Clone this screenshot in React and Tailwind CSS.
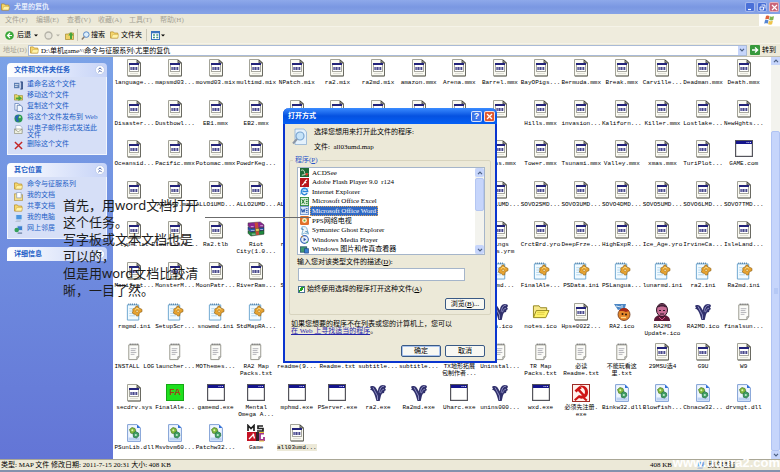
import React from "react";

function DocIcon() {
  return (
    <svg viewBox="0 0 16 18" className="h-[18px] w-4" aria-hidden="true">
      <path d="M1.500 .5H11L14.500 4v13h-13z" fill="#fafaf2" stroke="#a3a398" />
      <path d="M14.500 4.500v12.500H2" fill="none" stroke="#6a6a62" />
      <path d="M11 1v3h3.500z" fill="#b8b8b0" stroke="#33332f" strokeWidth=".8" />
      <rect x="3.500" y="4.500" width="9" height="8" fill="#fff" stroke="#a8a8a0" />
      <rect x="3" y="4" width="10" height="2" fill="#23237a" />
      <rect x="4.500" y="8" width="7" height="3" fill="#8f8fba" />
      <path d="M5 8v3M7.500 8v3M10.500 8v3" stroke="#3f3f86" strokeWidth=".9" />
      <path d="M4 14.500h8" stroke="#deded6" />
    </svg>
  );
}

function IniIcon() {
  return (
    <svg viewBox="0 0 18 19" className="h-[18px] w-[18px]" aria-hidden="true">
      <path d="M2 2h12v16H2z" fill="#f1faff" stroke="#6aa5cf" />
      <path d="M3 1.200h10" stroke="#4f7fa8" strokeDasharray="1 1" strokeWidth="1.600" />
      <path d="M4 6h4M4 8.500h4M4 11h5M4 13.500h6" stroke="#a9d1ea" strokeWidth=".9" />
      <path d="M11 3.500l2-.5.8 2.200 1.600.6 2 1v2.400l-2.200.7-1 1.600-.2 2-2.200.3-1.200-1.800-1.600-.2-1.800-1.300.8-2-.4-1.700 1.600-1.400 1.200.2z" fill="#e9a431" stroke="#8c5f17" strokeWidth=".7" />
      <path d="M10 7l2-1.500 2.500 1" stroke="#ffe08a" fill="none" />
      <circle cx="12.300" cy="8.800" r="1.200" fill="#fff0bd" stroke="#a87722" strokeWidth=".6" />
    </svg>
  );
}

function TxtIcon() {
  return (
    <svg viewBox="0 0 14 19" className="h-[18px] w-[14px]" aria-hidden="true">
      <path d="M1.500 2h10.500v12.500L10 17.500H1.500z" fill="#fbfbf8" stroke="#96968c" />
      <path d="M2.500 1.300h9" stroke="#666" strokeDasharray="1 1" strokeWidth="1.600" />
      <path d="M3.500 6h6M3.500 8h5M3.500 10h6M3.500 12h4" stroke="#a9a9b0" strokeWidth=".9" />
      <path d="M12 14.500H10v3" fill="#d9d9d0" stroke="#777" strokeWidth=".7" />
    </svg>
  );
}

function WinIcon() {
  return (
    <svg viewBox="0 0 18 17" className="h-[17px] w-[18px]" aria-hidden="true">
      <rect x=".6" y=".6" width="16.800" height="15.800" fill="#fff" stroke="#55555c" strokeWidth="1.200" />
      <rect x="1" y="1" width="16" height="3" fill="#14148c" />
      <path d="M11.500 2.500h1M13.300 2.500h1M15 2.500h1" stroke="#cfd0ee" strokeWidth="1.200" />
    </svg>
  );
}

function DllIcon() {
  return (
    <svg viewBox="0 0 14 18" className="h-[18px] w-[14px]" aria-hidden="true">
      <path d="M.6 .6h9.400L13.400 4v13.400H.6z" fill="#eef5ff" stroke="#7f9fd6" />
      <path d="M10 .6V4h3.400z" fill="#2f6fd8" />
      <path d="M1.500 15h11" stroke="#bcd2f2" strokeWidth="3" />
      <path d="M2.500 5.500l2.500-2 3 1 .8 2.500-2 2.500-3-.3z" fill="#7fba3c" stroke="#4a7a26" strokeWidth=".7" />
      <path d="M6 9.500l2.500-2 3 1.500.3 3-2.300 2-3-.8z" fill="#3f9f63" stroke="#256b43" strokeWidth=".7" />
      <circle cx="5.300" cy="6.300" r="1" fill="#e4f3b5" />
      <circle cx="8.800" cy="11" r="1.100" fill="#c4e8cd" />
    </svg>
  );
}

function YuriIcon() {
  return (
    <svg viewBox="0 0 18 18" className="h-[18px] w-[18px]" aria-hidden="true">
      <path d="M1 3c1-1.500 4-1.500 5.500.5L9 7.500C9 4 10.500 1 14 1c1.800 0 3 .8 3 2l-1 1.500 1 1.500-1.500 1-.5 2-2 .5-1 2-1.300 5.500H7.500L6 12C5 9 3.500 6 1 5.500l1-1z" fill="#30306c" />
      <path d="M4 3.500L8.500 12v4M15 2.200c-3 0-4.200 3-4.800 6.500M15 5.200c-2 .3-3 1.800-3.500 4" stroke="#9494c8" fill="none" strokeWidth=".9" />
    </svg>
  );
}

function FolderArt() {
  return (
    <svg viewBox="0 0 20 18" className="h-[17px] w-5" aria-hidden="true">
      <path d="M2 15V3h6l1.500 2H16v3" fill="#f7e88a" stroke="#92851e" />
      <path d="M2 15.500L5 8h13.500L15 15.500z" fill="#fff36a" stroke="#92851e" />
      <path d="M6 10h8M5.500 12h8" stroke="#d9c43d" strokeWidth=".8" />
    </svg>
  );
}

function FaIcon() {
  return (
    <span className="flex h-[17px] w-[18px] items-center justify-center border border-[#14a814] bg-[#1ee01e] font-['Liberation_Sans',sans-serif] text-[9px] leading-none font-bold text-[#a0401c]">
      FA
    </span>
  );
}

function RedIcon() {
  return (
    <svg viewBox="0 0 18 18" className="h-[18px] w-[18px]" aria-hidden="true">
      <rect x=".5" y=".5" width="17" height="17" fill="#fff1ec" stroke="#9c2a24" />
      <path d="M8 1.500c5.500-.5 8.500 3 8 7.500-.3 2.500-1.500 4-3 4.800l2.500 2-1.500 1.400-3-2.600c-1.500.2-2.800 0-4-.5L3.500 17 2 15.500 7 11c3 1.500 6 0 6-3 0-2.700-2-4.800-5-5.500z" fill="#cf1515" />
      <path d="M2.500 6.500l5-4.500 2.500 2-2 1.500 4.500 5-1.800 1.600-4.700-5.200-1.500 1.600z" fill="#cf1515" />
    </svg>
  );
}

function RarIcon() {
  return (
    <svg viewBox="0 0 19 17" className="h-4 w-[18px]" aria-hidden="true">
      <path d="M1 2l13-1 4 3v3L4 8 1 5z" fill="#8a2590" stroke="#333" strokeWidth=".5" />
      <path d="M1 6l3 2 14-1v3L4 12 1 9z" fill="#2350b0" stroke="#222" strokeWidth=".5" />
      <path d="M1 10l3 2 14-2v4L4 16l-3-3z" fill="#1f8a3d" stroke="#222" strokeWidth=".5" />
      <path d="M8 1.500h3.500l1.500 13-3.500.5z" fill="#c74938" />
      <path d="M9 8h4v3H9z" fill="#ecc95a" stroke="#5e421a" strokeWidth=".5" />
      <path d="M4 6h3M14 5h3M4 10h4M14 9h3M5 14h4" stroke="#f0eef5" strokeWidth=".7" />
    </svg>
  );
}

function MsgIcon() {
  return (
    <svg viewBox="0 0 18 18" className="h-[18px] w-[18px]" aria-hidden="true">
      <path d="M1 7V1.500l3 3 3-3V7M16 2h-5v2.500h5V7h-6" fill="none" stroke="#222" strokeWidth="1.700" />
      <rect x="0" y="8" width="9" height="9" fill="#c51224" />
      <path d="M2 15l5-5M6 9.500l1.500 5" stroke="#fff" strokeWidth="1.300" />
      <rect x="9" y="8" width="3" height="9" fill="#33212a" />
      <path d="M17 9.500h-4v6.500h4v-3" fill="none" stroke="#a2348e" strokeWidth="1.800" />
      <path d="M12 8.500h5M12 17h5" stroke="#e8c431" strokeWidth="1" />
    </svg>
  );
}

function Ra2Icon() {
  return (
    <svg viewBox="0 0 18 18" className="h-[18px] w-[18px]" aria-hidden="true">
      <path d="M1 1h12l-1 4-7 2z" fill="#4b86c4" />
      <path d="M3 3l5 1M9 2v4" stroke="#dceaf7" />
      <circle cx="11" cy="11.500" r="6" fill="#e4872a" stroke="#693014" strokeWidth=".8" />
      <path d="M6 8c2-4 8-4 10 0l-3 1-3-1z" fill="#a52a18" />
      <circle cx="9.500" cy="11" r="1" fill="#31190e" />
      <circle cx="13" cy="11.500" r="1" fill="#31190e" />
      <path d="M8 14.500h5" stroke="#fbd88b" strokeWidth="1.300" />
    </svg>
  );
}

function UpdateIcon() {
  return (
    <svg viewBox="0 0 18 18" className="h-[18px] w-[18px]" aria-hidden="true">
      <path d="M1 18c0-5 4-6 8-6s8 1 8 6z" fill="#5c1836" />
      <ellipse cx="9" cy="7" rx="5.500" ry="6.500" fill="#c76d95" stroke="#2c1524" />
      <path d="M4 5c1-5 9-5 10 0-3-2-7-2-10 0z" fill="#432239" />
      <path d="M6 7.500h2M10 7.500h2M7 11h4" stroke="#2c1524" strokeWidth="1.100" />
      <path d="M6 14l3 3 3-3" stroke="#d65484" fill="none" />
    </svg>
  );
}

const ICONS = {
  doc: DocIcon,
  ini: IniIcon,
  txt: TxtIcon,
  win: WinIcon,
  dll: DllIcon,
  yuri: YuriIcon,
  folder: FolderArt,
  fa: FaIcon,
  red: RedIcon,
  rar: RarIcon,
  msg: MsgIcon,
  ra2: Ra2Icon,
  update: UpdateIcon,
};

const d = (...names) => names.map((n) => ["doc", n]);

const FILES = [
  ...d("language...", "mapsmd03...", "movmd03.mix", "multimd.mix", "NPatch.mix", "ra2.mix", "ra2md.mix", "amazon.mmx", "Arena.mmx", "Barrel.mmx", "BayOPigs...", "Bermuda.mmx", "Break.mmx", "Carville...", "Deadman.mmx", "Death.mmx"),
  ...d("Disaster...", "Dustbowl...", "EB1.mmx", "EB2.mmx", "", "", "", "", "", "", "Hills.mmx", "invasion...", "Kaliforn...", "Killer.mmx", "Lostlake...", "NewHghts..."),
  ...d("Oceansid...", "Pacific.mmx", "Potomac.mmx", "PowdrKeg...", "", "", "", "", "", "Texas.mmx", "Tower.mmx", "Tsunami.mmx", "Valley.mmx", "xmas.mmx", "TuriPlot..."),
  ["win", "GAME.com"],
  ...d("", "ALLMAP.map", "ALLO1UMD...", "ALLO2UMD...", "ALLO3UMD...", "", "", "", "", "SOVO1UMD...", "SOVO2SMD...", "SOVO3UMD...", "SOVO4DMD...", "SOVO5UMD...", "SOVO6LMD...", "SOVO7TMD..."),
  ...d("type.lst", "Blowfish.t...", "Ra2.tlb"),
  ["rar", "Riot\nCity(1.0..."],
  ...d("readme...", "", "", "", "", "Kings\nWars.yrm", "CrctBrd.yro", "DeepFrze...", "HighExpR...", "Ice_Age.yro", "IrvineCa...", "IsleLand..."),
  ...d("Manifest...", "MonsterM...", "MoonPatr...", "RiverRam...", "Sedona...", "", "", "", ""),
  ["ini", "artmd..."],
  ["ini", "FinalAle..."],
  ["ini", "PSData.ini"],
  ["ini", "PSLangua..."],
  ["ini", "lunarmd.ini"],
  ["ini", "ra2.ini"],
  ["ini", "Ra2md.ini"],
  ["ini", "rmgmd.ini"],
  ["ini", "SetupScr..."],
  ["ini", "snowmd.ini"],
  ["ini", "StdMapRA..."],
  ["ini", "Sun.ini"],
  ["ini", ""],
  ["ini", ""],
  ["ini", ""],
  ["ini", ""],
  ["yuri", "mna.ico"],
  ["folder", "notes.ico"],
  ["doc", "Hpse0022..."],
  ["ra2", "RA2.ico"],
  ["update", "RA2MD\nUpdate.ico"],
  ["yuri", "RA2MD.ico"],
  ["txt", "finalsun..."],
  ["txt", "INSTALL LOG"],
  ["txt", "launcher..."],
  ["txt", "MOThemes..."],
  ["txt", "RA2 Map\nPacks.txt"],
  ["txt", "readme(9..."],
  ["txt", "Readme.txt"],
  ["txt", "subtitle..."],
  ["txt", "subtitle..."],
  ["txt", "TX地形拓展\n包制作者..."],
  ["txt", "Uninstal..."],
  ["txt", "TR Map\nPacks.txt"],
  ["txt", "必读\nReadme.txt"],
  ["txt", "不能玩看这\n里.txt"],
  ["doc", "29MSU选4"],
  ["doc", "G9U"],
  ["doc", "W9"],
  ["doc", "secdrv.sys"],
  ["fa", "FinalAle..."],
  ["win", "gamemd.exe"],
  ["win", "Mental\nOmega A..."],
  ["win", "mphmd.exe"],
  ["win", "PServer.exe"],
  ["yuri", "ra2.exe"],
  ["yuri", "Ra2md.exe"],
  ["win", "Uharc.exe"],
  ["yuri", "unins000..."],
  ["win", "wxd.exe"],
  ["red", "必须先注册.\nexe"],
  ["dll", "Binkw32.dll"],
  ["dll", "Blowfish..."],
  ["dll", "Cbnacw32..."],
  ["dll", "drvmgt.dll"],
  ["dll", "PSunLib.dll"],
  ["dll", "Msvbvm60..."],
  ["dll", "Patchw32..."],
  ["msg", "Game"],
  ["doc", "all03umd...", true],
];

function FileItem({ kind, name, selected }) {
  const Icon = ICONS[kind];
  return (
    <li className="flex min-w-0 flex-col items-center gap-[2px]">
      <span className="flex h-[18px] items-start">
        <Icon />
      </span>
      <span className={selected ? "bg-[#ece9d8] whitespace-pre" : "text-center whitespace-pre"}>{name}</span>
    </li>
  );
}

function SmallFolder() {
  return (
    <svg viewBox="0 0 10 9" className="h-2 w-[9px] shrink-0" aria-hidden="true">
      <path d="M.5 8V1h3.200l1 1.300h4V8z" fill="#f6d66b" stroke="#b68d28" strokeWidth=".8" />
      <path d="M1.500 7.800L3 4h6.500L8.500 7.800z" fill="#fff3ab" stroke="#c79f3a" strokeWidth=".5" />
    </svg>
  );
}

function TaskGlyph({ kind }) {
  return (
    <svg viewBox="0 0 10 10" className="h-[9px] w-[9px] shrink-0" aria-hidden="true">
      {kind === "rename" && (
        <>
          <rect x="0" y="2" width="6" height="6" fill="#5c7eb2" />
          <path d="M1 4h4M1 6h3" stroke="#fff" strokeWidth=".8" />
          <path d="M7 1h2.500v8H7M8.200 1v8" stroke="#2c4a82" fill="none" />
        </>
      )}
      {kind === "move" && (
        <>
          <path d="M.5 9V3h3l1 1h5v5z" fill="#e6d76a" stroke="#97862b" strokeWidth=".7" />
          <path d="M2 6h3V4l4 3-4 3V8H2z" fill="#4aa53a" />
        </>
      )}
      {kind === "copy" && (
        <>
          <path d="M1 .5h4L7 3v5H1z" fill="#fff" stroke="#5377b4" strokeWidth=".8" />
          <path d="M3.500 2.500h4L9.300 4.500v5H3.500z" fill="#f5faff" stroke="#3d629f" strokeWidth=".8" />
        </>
      )}
      {kind === "web" && (
        <>
          <circle cx="5" cy="5" r="4.500" fill="#2a9a50" />
          <path d="M1 3c2-2 3-2 5-2L4 5l2 3-3 1z" fill="#2c62b8" />
          <circle cx="6.500" cy="3.500" r="1.200" fill="#b5e3a9" />
        </>
      )}
      {kind === "mail" && (
        <>
          <path d="M2 .5h5L9 3v5H2z" fill="#fff" stroke="#8ea3bf" strokeWidth=".7" />
          <path d="M.5 4.500h8.500v5H.5zl4.200 3 4.300-3" fill="#eef0e2" stroke="#8a8a70" strokeWidth=".7" />
        </>
      )}
      {kind === "delete" && <path d="M1 1l8 8M9 1L1 9" stroke="#c32424" strokeWidth="1.600" />}
      {kind === "docs" && (
        <>
          <path d="M.5 2h4l1 1h4v6.500h-9z" fill="#f4dc85" stroke="#a98a35" strokeWidth=".7" />
          <path d="M3 .5h5v6H3z" fill="#fff" stroke="#7c94b8" strokeWidth=".7" />
        </>
      )}
      {kind === "pc" && (
        <>
          <rect x="2" y=".5" width="7" height="6" fill="#4a94e0" stroke="#d9e6f5" />
          <path d="M1 9h6l1-2H3z" fill="#b9c5d9" />
        </>
      )}
      {kind === "net" && (
        <>
          <rect x="3.500" y="1" width="6" height="5" fill="#3c7fd0" stroke="#d3e1f2" strokeWidth=".8" />
          <circle cx="3" cy="5.500" r="2.500" fill="#35a05a" />
          <path d="M4 9h5" stroke="#62789c" strokeWidth="1.300" />
        </>
      )}
    </svg>
  );
}

function Chevron({ flip }) {
  return (
    <svg viewBox="0 0 10 10" className="h-[10px] w-[10px]" aria-hidden="true">
      <circle cx="5" cy="5" r="4.500" fill="#fff" stroke="#b3c3e6" strokeWidth=".7" />
      <path d={flip ? "M3.300 2.800L5 4.500l1.700-1.700M3.300 5.500L5 7.200l1.700-1.700" : "M3.300 4.500L5 2.800l1.700 1.700M3.300 7.200L5 5.500l1.700 1.700"} fill="none" stroke="#2b4a9c" strokeWidth=".9" />
    </svg>
  );
}

function Panel({ title, items, flip }) {
  return (
    <section>
      <h2 className="flex h-[14px] items-center justify-between rounded-t-sm bg-linear-to-r from-white to-[#c6d3f7] pr-[2px] pl-[7px] font-bold text-[#215dc6]">
        {title}
        <button type="button" aria-label={title}>
          <Chevron flip={flip} />
        </button>
      </h2>
      {items && (
        <ul className="flex flex-col gap-[2px] border border-t-0 border-white/70 bg-[#d6dff7] pt-1 pb-1 pl-[6px] text-[#215dc6]">
          {items.map(([kind, label]) => (
            <li key={label}>
              <a href="#" className="flex items-start gap-[4px] leading-[7px] whitespace-pre">
                {kind === "folder" ? (
                  <span className="flex h-[9px] items-center"><SmallFolder /></span>
                ) : (
                  <TaskGlyph kind={kind} />
                )}
                {label}
              </a>
            </li>
          ))}
        </ul>
      )}
    </section>
  );
}

const TASKS = [
  ["rename", "重命名这个文件"],
  ["move", "移动这个文件"],
  ["copy", "复制这个文件"],
  ["web", "将这个文件发布到 Web"],
  ["mail", "以电子邮件形式发送此\n文件"],
  ["delete", "删除这个文件"],
];

const PLACES = [
  ["folder", "命令与征服系列"],
  ["docs", "我的文档"],
  ["folder", "共享文档"],
  ["pc", "我的电脑"],
  ["net", "网上邻居"],
];

const PROGRAMS = [
  ["acd", "ACDSee"],
  ["flash", "Adobe Flash Player 9.0  r124"],
  ["ie", "Internet Explorer"],
  ["excel", "Microsoft Office Excel"],
  ["word", "Microsoft Office Word"],
  ["pps", "PPS网络电视"],
  ["ghost", "Symantec Ghost Explorer"],
  ["wmp", "Windows Media Player"],
  ["pic", "Windows 图片和传真查看器"],
];

function ProgramIcon({ kind }) {
  return (
    <svg viewBox="0 0 10 10" className="h-[9px] w-[9px] shrink-0" aria-hidden="true">
      {kind === "acd" && (
        <>
          <rect width="10" height="10" fill="#1e6a35" />
          <path d="M1 3c2-2 4 0 4 2s3 3 4 1M2 8l5-1" stroke="#e9f4e0" fill="none" />
          <circle cx="7.500" cy="7" r="1.500" fill="#d63a2a" />
        </>
      )}
      {kind === "flash" && (
        <>
          <rect width="10" height="10" fill="#b8141a" />
          <path d="M8 2C5 2 5 8 2 8M4.500 5.200H7" stroke="#fff" strokeWidth="1.300" fill="none" />
        </>
      )}
      {kind === "ie" && (
        <>
          <path d="M8 6.800A3.500 3.500 0 1 1 8.500 5H3" fill="none" stroke="#2b86d9" strokeWidth="1.700" />
          <path d="M.5 8.500C0 6 6 1 9.500 1.200" fill="none" stroke="#4aa4e8" strokeWidth=".8" />
        </>
      )}
      {kind === "excel" && (
        <>
          <rect x=".5" y=".5" width="9" height="9" fill="#d9efd6" stroke="#2f8a3c" />
          <path d="M2 2.500l3 5M5 2.500l-3 5M6.500 3h2M6.500 5h2M6.500 7h2" stroke="#217a2f" strokeWidth="1.100" />
        </>
      )}
      {kind === "word" && (
        <>
          <rect x=".5" y=".5" width="9" height="9" fill="#dbe8fa" stroke="#6d94cf" />
          <path d="M1.500 3l1 4 1-3 1 3 1-4M6.500 3h2M6.500 5h2M6.500 7h2" stroke="#1f50a8" fill="none" />
        </>
      )}
      {kind === "pps" && (
        <>
          <rect width="10" height="10" rx="1.500" fill="#e1702a" />
          <circle cx="5" cy="5" r="2.700" fill="#fff0c8" />
          <circle cx="5" cy="5" r="1.200" fill="#6fb13c" />
        </>
      )}
      {kind === "ghost" && (
        <>
          <path d="M2 1c3-1 6 0 6 3l1.500 5L5 8 2 9.500 3 5z" fill="#eef6fb" stroke="#5b9cc4" strokeWidth=".8" />
          <path d="M1 3l3 1M6 6l3 1" stroke="#2e76ac" />
        </>
      )}
      {kind === "wmp" && (
        <>
          <circle cx="5" cy="5" r="4.300" fill="#e8f0fa" stroke="#3c68b8" strokeWidth="1.200" />
          <path d="M4 3l3 2-3 2z" fill="#2a51a8" />
          <path d="M1.500 2.500L3 1.500" stroke="#e08a2c" strokeWidth="1.400" />
          <path d="M8.500 7.500L7 8.700" stroke="#3fa64a" strokeWidth="1.400" />
        </>
      )}
      {kind === "pic" && (
        <>
          <rect x=".5" y="2" width="7" height="6" fill="#3f9a70" stroke="#1d4c66" strokeWidth=".8" />
          <path d="M5 4h4.500v5H5z" fill="#3b7fd0" stroke="#1b3f80" strokeWidth=".7" />
        </>
      )}
    </svg>
  );
}

function OpenWithDialog() {
  return (
    <div
      role="dialog"
      aria-labelledby="dialog-title"
      className="absolute top-[108px] left-[283px] w-[214px] rounded-t-md border-2 border-t-0 border-[#0a35cf] bg-[#ece9d8]"
    >
      <header className="-mx-[2px] flex h-4 items-center gap-[2px] rounded-t-md bg-linear-to-b from-[#3a8bff] via-[#0551e0] to-[#0560f5] pr-[2px] pl-[5px] text-white">
        <h1 id="dialog-title" className="flex-1 font-bold">打开方式</h1>
        <button type="button" aria-label="帮助" className="h-[11px] w-[11px] rounded-xs border border-white/80 bg-[#3c74e8] text-center font-['Liberation_Sans',sans-serif] text-[9px] leading-[9px] font-bold">
          ?
        </button>
        <button type="button" aria-label="关闭" className="flex h-[11px] w-[11px] items-center justify-center rounded-xs border border-white/80 bg-[#e2582f]">
          <svg viewBox="0 0 7 7" className="h-[7px] w-[7px]" aria-hidden="true">
            <path d="M1 1l5 5M6 1L1 6" stroke="#fff" strokeWidth="1.300" />
          </svg>
        </button>
      </header>

      <div className="flex flex-col px-[4px] pb-[4px]">
        <div className="flex gap-[7px] pt-1 pl-[3px]">
          <svg viewBox="0 0 15 18" className="h-[18px] w-[15px]" aria-hidden="true">
            <path d="M3 1h9l2.500 3v12.500H3z" fill="#e4f1fc" stroke="#8eb0d4" strokeWidth=".8" />
            <circle cx="8" cy="8" r="4" fill="#c6e3f8" stroke="#7ba6d0" strokeWidth="1.200" />
            <path d="M5 11l-4 4.500" stroke="#8c97a6" strokeWidth="2" />
          </svg>
          <div className="flex flex-col gap-[6px] leading-[9px]">
            <p>选择您想用来打开此文件的程序:</p>
            <p>文件:&nbsp; all03umd.map</p>
          </div>
        </div>

        <fieldset className="mt-[3px] rounded-xs border border-[#d8d4bf] pt-[2px] pr-[5px] pb-[4px] pl-[7px]">
          <legend className="-ml-[4px] px-[2px] leading-[10px] text-[#2a56c8]">
            程序(<u>P</u>)
          </legend>
          <div className="flex h-[88px] border border-[#a5b5ca] bg-white">
            <ul role="listbox" aria-label="程序" className="grid flex-1 grid-rows-9 overflow-hidden pl-[2px]">
              {PROGRAMS.map(([kind, label]) => (
                <li key={label} role="option" aria-selected={kind === "word"} className="flex items-center gap-px">
                  <ProgramIcon kind={kind} />
                  <span className={kind === "word" ? "border border-dotted border-[#d9a45c] bg-[#316ac5] px-px leading-[8px] text-white" : "px-[2px] leading-[8px] whitespace-pre"}>
                    {label}
                  </span>
                </li>
              ))}
            </ul>
            <div className="flex w-[9px] flex-col bg-[#f3f3ee]">
              <button type="button" aria-label="向上滚动" className="flex h-[9px] items-center justify-center rounded-xs bg-[#c6d5fb]">
                <svg viewBox="0 0 6 4" className="h-1 w-[6px]" aria-hidden="true"><path d="M1 3.200l2-2 2 2" fill="none" stroke="#4d6185" strokeWidth="1.200" /></svg>
              </button>
              <div className="mt-px h-[33px] rounded-xs border border-[#b4c6f2] bg-[#c6d5fb]" />
              <button type="button" aria-label="向下滚动" className="mt-auto flex h-[9px] items-center justify-center rounded-xs bg-[#c6d5fb]">
                <svg viewBox="0 0 6 4" className="h-1 w-[6px]" aria-hidden="true"><path d="M1 .8l2 2 2-2" fill="none" stroke="#4d6185" strokeWidth="1.200" /></svg>
              </button>
            </div>
          </div>
          <label htmlFor="description" className="mt-[3px] block leading-[9px]">
            输入您对该类型文件的描述(<u>D</u>):
          </label>
          <input id="description" type="text" className="mt-px ml-px block h-[13px] w-[167px] border border-[#a5b5ca] bg-white px-px" />
          <div className="mt-[4px] flex items-center gap-[2px] leading-[9px]">
            <input
              id="always"
              type="checkbox"
              defaultChecked
              className="ml-px h-[7px] w-[7px] appearance-none border border-[#4a6f94] bg-white checked:bg-[linear-gradient(135deg,#fff_30%,#21a121_30%,#21a121_60%,#fff_60%)]"
            />
            <label htmlFor="always">始终使用选择的程序打开这种文件(<u>A</u>)</label>
          </div>
          <div className="mt-[4px] flex justify-end">
            <button type="button" className="h-[12px] w-10 rounded-xs border border-[#3a5a85] bg-[#f8f8f3] leading-[9px]">
              浏览(<u>B</u>)...
            </button>
          </div>
        </fieldset>

        <p className="mt-[6px] pl-[2px] leading-[7px]">
          如果您想要的程序不在列表或您的计算机上，您可以
          <br />
          <a href="#" className="text-[#2626a8] underline">在 Web 上寻找适当的程序</a>。
        </p>
        <div className="mt-[10px] flex justify-end gap-1 pr-[6px]">
          <button type="button" className="h-[12px] w-10 rounded-xs border border-[#3a5a85] bg-[#f8f8f3] leading-[9px] ring-1 ring-[#a9c3ee] ring-inset">确定</button>
          <button type="button" className="h-[12px] w-10 rounded-xs border border-[#3a5a85] bg-[#f8f8f3] leading-[9px]">取消</button>
        </div>
      </div>
    </div>
  );
}

const MENUS = ["文件(F)", "编辑(E)", "查看(V)", "收藏(A)", "工具(T)", "帮助(H)"];

function WindowButton({ label, close, children }) {
  return (
    <button
      type="button"
      aria-label={label}
      className={close ? "flex h-[10px] w-[10px] items-center justify-center rounded-xs border border-white/50 bg-[#c9647a]" : "flex h-[10px] w-[10px] items-center justify-center rounded-xs border border-white/50 bg-[#4a70d8]"}
    >
      <svg viewBox="0 0 7 7" className="h-[7px] w-[7px]" fill="none" stroke="#fff" strokeWidth="1.200" aria-hidden="true">
        {children}
      </svg>
    </button>
  );
}

export default function App() {
  return (
    <div className="relative flex h-screen flex-col overflow-hidden bg-[#ece9d8] font-['Liberation_Serif','Noto_Sans_CJK_SC',serif] text-[7px] leading-[7px] text-black">
      <header className="flex h-[14px] shrink-0 items-center gap-[2px] bg-linear-to-b from-[#8ea9ea] via-[#7a97e2] to-[#86a3e6] pr-px pl-px text-[#e6edfc]">
        <SmallFolder />
        <h1 className="flex-1 pl-[2px] font-bold">尤里的复仇</h1>
        <WindowButton label="最小化"><path d="M1 5.500h3" /></WindowButton>
        <WindowButton label="还原"><path d="M2.500 1h3.500v3.500M1 3h3.500v3H1z" strokeWidth=".9" /></WindowButton>
        <WindowButton label="关闭" close><path d="M1 1l5 5M6 1L1 6" /></WindowButton>
      </header>

      <nav className="flex h-3 shrink-0 items-stretch text-[#a5a294]">
        <div className="flex flex-1 items-center gap-[7px] pl-[5px]">
          {MENUS.map((m) => (
            <button key={m} type="button" className="w-6 text-left whitespace-nowrap">{m}</button>
          ))}
        </div>
        <span className="flex w-[21px] items-center justify-center bg-white">
          <svg viewBox="0 0 11 10" className="h-[10px] w-[11px]" aria-hidden="true">
            <path d="M2 1c1.500-.8 2.500-.5 3.500 0L4.700 4.500c-1-.6-2-.6-3.500 0z" fill="#e0633a" />
            <path d="M6 1.300c1.500.8 2.500.5 4 0L9.200 5c-1.300.6-2.500.6-4 0z" fill="#7fb551" />
            <path d="M1 5.200c1.500-.8 2.500-.5 3.500 0L3.700 8.800c-1-.6-2-.6-3.500 0z" fill="#5686d2" />
            <path d="M4.900 5.700c1.500.8 2.500.5 4 0L8.100 9.300c-1.300.6-2.500.6-4 0z" fill="#efc44a" />
          </svg>
        </span>
      </nav>

      <div className="flex h-[18px] shrink-0 items-center border-y border-y-[#f5f3e8] bg-[#efecdd] pl-[5px]">
        <button type="button" className="flex items-center gap-[3px]">
          <svg viewBox="0 0 9 9" className="h-[9px] w-[9px]" aria-hidden="true">
            <circle cx="4.500" cy="4.500" r="4.300" fill="#3aa83a" />
            <path d="M5 2L2.500 4.500 5 7M2.700 4.500H7" stroke="#fff" strokeWidth="1.200" fill="none" />
          </svg>
          后退
          <svg viewBox="0 0 4 3" className="h-[3px] w-1" aria-hidden="true"><path d="M0 .5h4l-2 2z" /></svg>
        </button>
        <button type="button" aria-label="前进" className="ml-[6px] flex items-center gap-[3px]">
          <svg viewBox="0 0 9 9" className="h-[9px] w-[9px]" aria-hidden="true">
            <circle cx="4.500" cy="4.500" r="3.500" fill="#e7e5da" stroke="#b5b3a8" strokeWidth="1.300" />
          </svg>
          <svg viewBox="0 0 4 3" className="h-[3px] w-1" aria-hidden="true"><path d="M0 .5h4l-2 2z" fill="#b5b3a8" /></svg>
        </button>
        <button type="button" aria-label="向上" className="ml-[5px]">
          <svg viewBox="0 0 9 9" className="h-[9px] w-[9px]" aria-hidden="true">
            <path d="M.5 8.500V3h3l1-1h4v6.500z" fill="#efd268" stroke="#a88a2c" strokeWidth=".7" />
            <path d="M5 8V4.500H3.300L6 1l2.500 3.500H7V8z" fill="#46a33c" />
          </svg>
        </button>
        <span className="mx-[3px] h-3 w-px bg-[#cbc8b8]" />
        <button type="button" className="flex items-center gap-px">
          <svg viewBox="0 0 9 9" className="h-[9px] w-[9px]" aria-hidden="true">
            <circle cx="5.300" cy="3.600" r="2.800" fill="#dceefb" stroke="#5b8ac6" />
            <path d="M3.300 5.700L.8 8.400" stroke="#88786a" strokeWidth="1.400" />
          </svg>
          搜索
        </button>
        <button type="button" className="ml-[5px] flex items-center gap-[2px]">
          <SmallFolder />
          文件夹
        </button>
        <span className="mx-[4px] h-3 w-px bg-[#cbc8b8]" />
        <button type="button" aria-label="查看" className="flex items-center gap-px">
          <svg viewBox="0 0 9 9" className="h-[9px] w-[9px]" aria-hidden="true">
            <rect x=".5" y=".5" width="8" height="8" fill="#fff" stroke="#3b74be" />
            <path d="M.5 1.500h8" stroke="#3b74be" strokeWidth="1.600" />
            <path d="M2 4h2M5.300 4h2M2 6.500h2M5.300 6.500h2" stroke="#4b9a80" strokeWidth="1.300" />
          </svg>
          <svg viewBox="0 0 4 3" className="h-[3px] w-1" aria-hidden="true"><path d="M0 .5h4l-2 2z" /></svg>
        </button>
      </div>

      <div className="flex h-[13px] shrink-0 items-center border-b border-[#c2bfae]">
        <label htmlFor="address" className="w-7 pl-[3px] whitespace-nowrap text-[#a5a294]">地址(D)</label>
        <div className="flex h-[11px] flex-1 items-center gap-[2px] border border-[#a9bad6] bg-white pl-px">
          <SmallFolder />
          <input id="address" type="text" defaultValue={"D:\\单机game^\\命令与征服系列\\尤里的复仇"} className="min-w-0 flex-1 bg-transparent outline-none" />
          <button type="button" aria-label="展开" className="flex h-[9px] w-2 items-center justify-center bg-[#c6d5fb]">
            <svg viewBox="0 0 6 4" className="h-1 w-[6px]" aria-hidden="true"><path d="M1 .8l2 2 2-2" fill="none" stroke="#4d6185" strokeWidth="1.200" /></svg>
          </button>
        </div>
        <button type="button" className="flex w-[33px] items-center gap-[2px] pl-[3px]">
          <svg viewBox="0 0 10 10" className="h-[10px] w-[10px]" aria-hidden="true">
            <rect width="10" height="10" rx="1" fill="#37993c" />
            <path d="M2 5h5.500M5 2.500L7.700 5 5 7.500" stroke="#fff" strokeWidth="1.300" fill="none" />
          </svg>
          转到
        </button>
      </div>

      <main className="flex min-h-0 flex-1 bg-white">
        <aside className="flex w-[113px] shrink-0 flex-col gap-2 bg-linear-to-b from-[#7ba2e7] to-[#6375d6] pt-[6px] pr-[6px] pl-[7px]">
          <Panel title="文件和文件夹任务" items={TASKS} />
          <Panel title="其它位置" items={PLACES} />
          <Panel title="详细信息" flip />
        </aside>
        <ul className="mt-[2px] grid h-[406px] flex-1 grid-cols-16 grid-rows-10 pr-[7px] pl-px font-['Liberation_Mono','Noto_Sans_CJK_SC',monospace] text-[6px]">
          {FILES.map(([kind, name, selected], i) => (
            <FileItem key={i} kind={kind} name={name} selected={selected} />
          ))}
        </ul>
        <div className="flex w-[9px] shrink-0 flex-col bg-[#f3f3ee]">
          <button type="button" aria-label="向上滚动" className="flex h-2 items-center justify-center bg-[#c6d5fb]">
            <svg viewBox="0 0 6 4" className="h-1 w-[6px]" aria-hidden="true"><path d="M1 3.200l2-2 2 2" fill="none" stroke="#4d6185" strokeWidth="1.200" /></svg>
          </button>
          <div className="mt-[66px] flex flex-1 items-center justify-center rounded-xs border border-[#b0c3f3] bg-[#c6d5fb]">
            <svg viewBox="0 0 4 6" className="h-[6px] w-1" aria-hidden="true"><path d="M0 1h4M0 3h4M0 5h4" stroke="#9db5ee" strokeWidth=".8" /></svg>
          </div>
          <button type="button" aria-label="向下滚动" className="flex h-2 items-center justify-center bg-[#c6d5fb]">
            <svg viewBox="0 0 6 4" className="h-1 w-[6px]" aria-hidden="true"><path d="M1 .8l2 2 2-2" fill="none" stroke="#4d6185" strokeWidth="1.200" /></svg>
          </button>
        </div>
      </main>

      <footer className="relative flex h-[13px] shrink-0 items-center border-t border-b-2 border-t-[#aaa796] border-b-[#8391ad] bg-[#ece9d8]">
        <p className="flex-1 pl-px whitespace-nowrap">类型: MAP 文件 修改日期: 2011-7-15 20:31 大小: 408 KB</p>
        <p className="w-[46px]">408 KB</p>
        <p className="flex w-[84px] items-center gap-[2px]">
          <TaskGlyph kind="pc" />
          我的电脑
        </p>
      </footer>

      <OpenWithDialog />

      <div className="absolute top-[217px] left-[205px] h-px w-[106px] bg-[#6b6b6b]" />
      <p className="absolute top-[197px] left-[63px] font-['Noto_Sans','Noto_Sans_CJK_SC',sans-serif] text-[13px] leading-[17px] whitespace-pre text-[#1c1c1c]">
        {"首先，用word文档打开\n这个任务。\n写字板或文本文档也是\n可以的，\n但是用word文档比较清\n晰，一目了然。"}
      </p>
      <p className="absolute right-0 bottom-[3px] font-['Liberation_Sans',sans-serif] text-[13px] leading-[13px] font-bold whitespace-nowrap text-white">
        www.uuura2.com
      </p>
    </div>
  );
}
